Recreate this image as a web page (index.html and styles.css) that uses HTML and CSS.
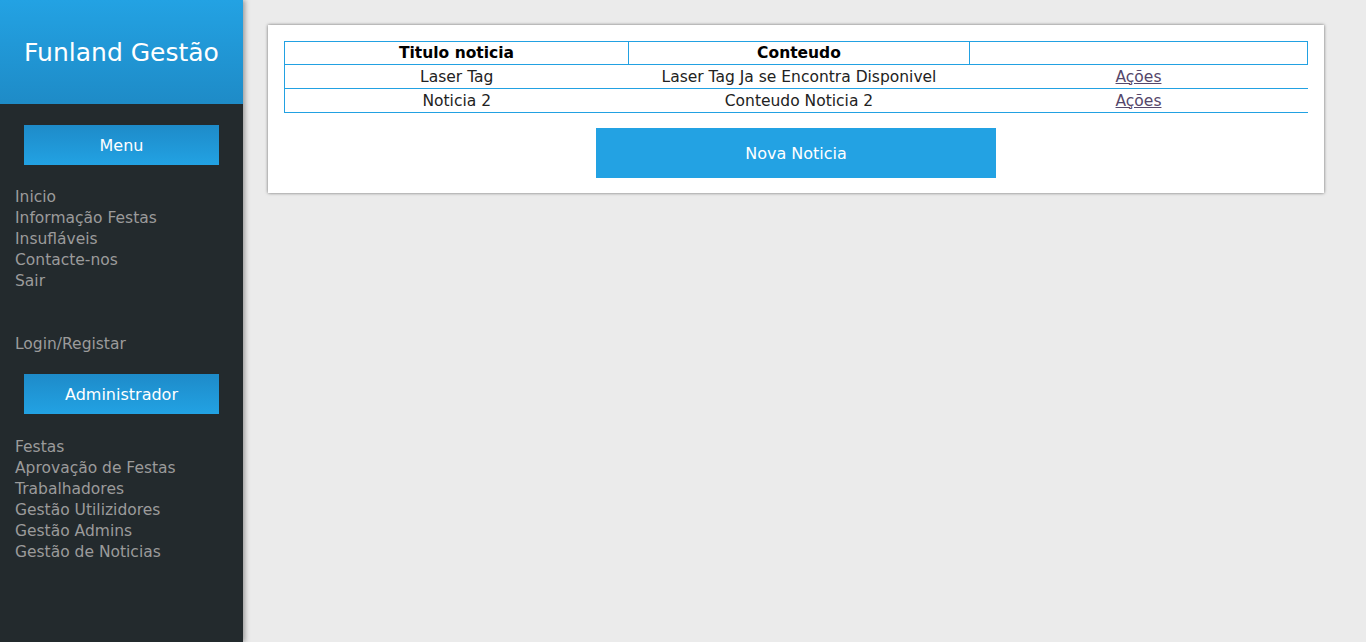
FILE: index.html
```html
<!DOCTYPE html>
<html lang="pt">
<head>
  <meta charset="UTF-8" />
  <title>Funland Gestão</title>
  <link rel="stylesheet" href="styles.css">
</head>
<body>
  <div class="layout">
    <div class="sidebar">
      <div class="brand">Funland Gestão</div>

      <div class="side-button">Menu</div>
      <ul class="nav">
        <li><a href="#">Inicio</a></li>
        <li><a href="#">Informação Festas</a></li>
        <li><a href="#">Insufláveis</a></li>
        <li><a href="#">Contacte-nos</a></li>
        <li><a href="#">Sair</a></li>
      </ul>
      <ul class="nav login">
        <li><a href="#">Login/Registar</a></li>
      </ul>

      <div class="side-button admin">Administrador</div>
      <ul class="nav admin-nav">
        <li><a href="#">Festas</a></li>
        <li><a href="#">Aprovação de Festas</a></li>
        <li><a href="#">Trabalhadores</a></li>
        <li><a href="#">Gestão Utilizidores</a></li>
        <li><a href="#">Gestão Admins</a></li>
        <li><a href="#">Gestão de Noticias</a></li>
      </ul>
    </div>

    <div class="main">
      <div class="card">
        <table class="news">
          <tr>
            <th class="col-title">Titulo noticia</th>
            <th class="col-content">Conteudo</th>
            <th></th>
          </tr>
          <tr>
            <td>Laser Tag</td>
            <td>Laser Tag Ja se Encontra Disponivel</td>
            <td><a href="#">Ações</a></td>
          </tr>
          <tr>
            <td>Noticia 2</td>
            <td>Conteudo Noticia 2</td>
            <td><a href="#">Ações</a></td>
          </tr>
        </table>
        <div class="actions">
          <button class="new-button">Nova Noticia</button>
        </div>
      </div>
    </div>
  </div>
</body>
</html>
```

FILE: styles.css
```css
html, body {
  margin: 0;
  padding: 0;
}

body {
  font-family: "DejaVu Sans", Verdana, sans-serif;
  background-color: #ebebeb;
}

.layout {
  display: flex;
  min-height: 642px;
}

.sidebar {
  width: 243px;
  flex-shrink: 0;
  background-color: #232a2d;
  box-shadow: 2px 0 5px rgba(0, 0, 0, 0.35);
  padding-bottom: 20px;
}

.brand {
  height: 104px;
  display: flex;
  align-items: center;
  justify-content: center;
  color: #fff;
  font-size: 25px;
  background: linear-gradient(to bottom, #23a2e3, #1e8bc7);
}

.side-button {
  width: 195px;
  height: 40px;
  margin: 21px 0 0 24px;
  display: flex;
  align-items: center;
  justify-content: center;
  color: #fff;
  font-size: 16px;
  background: linear-gradient(to bottom, #1e8bc9, #22a2e3);
}

.side-button.admin {
  margin-top: 19px;
}

.nav {
  list-style: none;
  margin: 22px 0 0 0;
  padding: 0 0 0 15px;
}

.nav li {
  line-height: 21px;
  font-size: 15.5px;
}

.nav a {
  color: #9b9b9b;
  text-decoration: none;
}

.nav.login {
  margin-top: 42px;
}

.nav.admin-nav {
  margin-top: 23px;
}

.main {
  flex: 1;
  padding: 25px 42px 0 25px;
}

.card {
  background-color: #fff;
  box-shadow: 0 0 3px rgba(0, 0, 0, 0.55);
  padding: 16px 16px 15px 16px;
}

.news {
  width: 100%;
  border-collapse: collapse;
  font-size: 15.5px;
  color: #222;
}

.news th {
  height: 22px;
  border: 1px solid #22a1e2;
  font-weight: bold;
  color: #000;
  padding: 0;
}

.col-title {
  width: 343px;
}

.col-content {
  width: 340px;
}

.news td {
  height: 23px;
  text-align: center;
  padding: 0;
  border-bottom: 1px solid #22a1e2;
}

.news td:first-child {
  border-left: 1px solid #22a1e2;
}

.news a {
  color: #55476b;
}

.actions {
  display: flex;
  justify-content: center;
  margin-top: 15px;
}

.new-button {
  width: 400px;
  height: 50px;
  border: none;
  background-color: #23a2e3;
  color: #fff;
  font-family: inherit;
  font-size: 16px;
  cursor: pointer;
}
```
